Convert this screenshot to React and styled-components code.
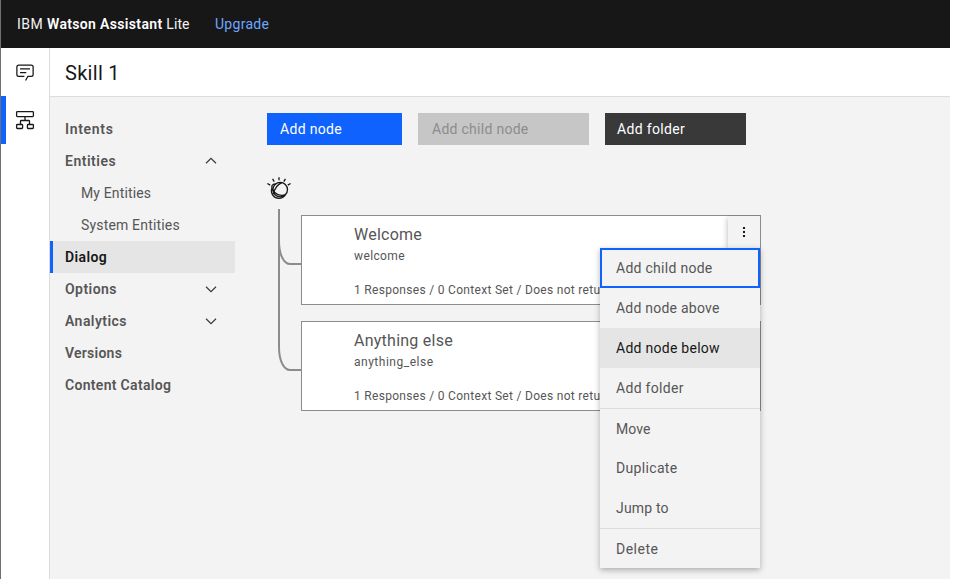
import React from 'react';
import styled, { createGlobalStyle } from 'styled-components';

const GlobalStyle = createGlobalStyle`
  * { box-sizing: border-box; }
  body { margin: 0; background: #fff; overflow: hidden; font-family: Roboto, "Liberation Sans", sans-serif; font-size: 14px; color: #565656; }
  svg { display: block; }
`;

const Frame = styled.div`
  width: 950px;
  height: 579px;
  border-left: 1px solid #6f6f6f;
  background: #f3f3f3;
  display: flex;
  flex-direction: column;
  overflow: hidden;
`;

const Text = styled.span`
  letter-spacing: ${(p) => p.$ls ?? 0.3}px;
  white-space: pre;
`;

const Header = styled.header`
  height: 48px;
  flex: none;
  background: #171717;
  color: #f3f3f3;
  display: flex;
  align-items: center;
  padding-left: 16px;
`;

const Brand = styled.div`
  display: flex;
  width: 198px;
  b { font-weight: 600; color: #fff; }
`;

const Upgrade = styled.a`
  color: #6ea6ff;
`;

const Body = styled.div`
  flex: 1;
  display: flex;
  min-height: 0;
`;

const Rail = styled.nav`
  width: 49px;
  flex: none;
  background: #fff;
  border-right: 1px solid #dcdcdc;
`;

const RailItem = styled.div`
  height: 48px;
  display: flex;
  align-items: center;
  border-left: 5px solid ${(p) => (p.$active ? '#0f62fe' : 'transparent')};
  padding-left: 9px;
  color: #171717;
`;

const Page = styled.div`
  flex: 1;
  display: flex;
  flex-direction: column;
`;

const TitleBar = styled.div`
  height: 49px;
  background: #fff;
  border-bottom: 1px solid #dcdcdc;
  padding: 1px 0 0 15px;
  display: flex;
  align-items: center;
  font-size: 20px;
  color: #171717;
`;

const Content = styled.div`
  flex: 1;
  display: flex;
  gap: 32px;
  padding-top: 16px;
`;

const SideNav = styled.nav`
  width: 185px;
  flex: none;
`;

const NavItem = styled.div`
  height: 32px;
  display: flex;
  align-items: center;
  justify-content: space-between;
  padding: 0 16px 0 ${(p) => (p.$sub ? 28 : 12)}px;
  border-left: 3px solid ${(p) => (p.$active ? '#0f62fe' : 'transparent')};
  background: ${(p) => (p.$active ? '#e5e5e5' : 'transparent')};
  color: ${(p) => (p.$active ? '#171717' : '#565656')};
  font-weight: ${(p) => (p.$sub ? 400 : 600)};
`;

const Toolbar = styled.div`
  display: flex;
  gap: 16px;
`;

const tones = {
  primary: ['#0f62fe', '#fff'],
  disabled: ['#c6c6c6', '#8c8c8c'],
  secondary: ['#393939', '#fff'],
};

const Button = styled.button`
  width: ${(p) => p.$width}px;
  height: 32px;
  border: 0;
  padding: 0 0 0 ${(p) => p.$inset}px;
  text-align: left;
  font: inherit;
  background: ${(p) => tones[p.$tone][0]};
  color: ${(p) => tones[p.$tone][1]};
`;

const Tree = styled.div`
  display: grid;
  grid-template-columns: 34px 460px;
  margin-top: 31px;
`;

const Nodes = styled.div`
  display: flex;
  flex-direction: column;
  gap: 16px;
  padding-top: 39px;
`;

const Node = styled.article`
  position: relative;
  height: 90px;
  background: #fff;
  border: 1px solid #8c8c8c;
  padding: 8px 0 0 52px;
  display: flex;
  flex-direction: column;
`;

const NodeName = styled.div`
  flex: none;
  font-size: 16px;
  line-height: 22px;
`;

const NodeLine = styled.div`
  flex: none;
  font-size: 12px;
  line-height: 20px;
  & + & { margin-top: 14px; }
`;

const Overflow = styled.div`
  position: absolute;
  top: 0;
  right: 0;
  width: 32px;
  height: 32px;
  background: #f3f3f3;
  box-shadow: 0 2px 6px rgba(0, 0, 0, 0.3);
  clip-path: inset(-1px 0 0 -6px);
  display: flex;
  align-items: center;
  justify-content: center;
`;

const Menu = styled.div`
  position: absolute;
  z-index: 2;
  top: 32px;
  right: 0;
  width: 160px;
  background: #f3f3f3;
  box-shadow: 0 2px 6px rgba(0, 0, 0, 0.3);
`;

const MenuItem = styled.div`
  height: 40px;
  display: flex;
  align-items: center;
  padding-left: 16px;
  color: ${(p) => (p.$hover ? '#171717' : '#565656')};
  background: ${(p) => (p.$hover ? '#e5e5e5' : 'transparent')};
  box-shadow: ${(p) => (p.$focus ? 'inset 0 0 0 2px #0f62fe' : p.$divided ? 'inset 0 1px #dcdcdc' : 'none')};
  padding-top: ${(p) => (p.$divided ? 2 : 0)}px;
`;

const ChatIcon = () => (
  <svg width="20" height="20" viewBox="0 0 32 32" fill="currentColor">
    <path d="M17.74 30 16 29l4-7h6a2 2 0 0 0 2-2V8a2 2 0 0 0-2-2H6a2 2 0 0 0-2 2v12a2 2 0 0 0 2 2h9v2H6a4 4 0 0 1-4-4V8a4 4 0 0 1 4-4h20a4 4 0 0 1 4 4v12a4 4 0 0 1-4 4h-4.84Z" />
    <path d="M8 10h16v2H8zM8 16h10v2H8z" />
  </svg>
);

const FlowIcon = () => (
  <svg width="20" height="20" viewBox="0 0 20 20" fill="none" stroke="currentColor" strokeWidth="1.3">
    <rect x="1.6" y="1.6" width="16.8" height="5" rx="0.8" />
    <rect x="1.6" y="14.5" width="6" height="4" rx="0.8" />
    <rect x="12.4" y="14.5" width="6" height="4" rx="0.8" />
    <path d="M10 6.6v3.9M5.5 14.5v-3.2q0-.8.8-.8h7.4q.8 0 .8.8v3.2" />
  </svg>
);

const Chevron = ({ up }) => (
  <svg width="16" height="16" viewBox="0 0 16 16" fill="none" stroke="#393939" strokeWidth="1.2">
    <path d={up ? 'M3 10.3 8 5.4l5 4.9' : 'M3 5.7l5 4.9 5-4.9'} />
  </svg>
);

const DotsIcon = () => (
  <svg width="2" height="10" fill="#171717">
    <path d="M0 0h2v2H0zM0 4h2v2H0zM0 8h2v2H0z" />
  </svg>
);

const TreeLines = () => (
  <svg width="34" height="236" fill="none" stroke="#8c8c8c" strokeWidth="2">
    <g stroke="#171717" strokeWidth="1.3">
      <path d="M12 1.2v3M5.6 2.9l1.6 2.7M18.4 2.9l-1.6 2.7M.4 7.5l2.8 1.6M23.6 7.5l-2.8 1.6" />
      <circle cx="13.2" cy="13.6" r="7.3" />
      <path d="M14.9 6.6C10.9 8.2 7.4 13 6.2 18.4" />
      <path d="M8.8 8C4.8 7.9 4 10.4 5.4 13.4C7.6 17.6 12.4 20.5 18.1 19" />
      <path d="M4.7 12.5C3.4 17.6 6.8 22.3 12 22.3C14.6 22.3 16.8 21.1 18.1 19.2" />
    </g>
    <path d="M12 33v138c0 14 5 23 11 23h11" />
    <path d="M12 65c0 14 5 23 11 23h11" />
  </svg>
);

const navItems = [
  { label: 'Intents', ls: 0.67 },
  { label: 'Entities', ls: 0.5, chevron: 'up' },
  { label: 'My Entities', ls: 0.14, sub: true },
  { label: 'System Entities', ls: 0.17, sub: true },
  { label: 'Dialog', ls: 0.37, active: true },
  { label: 'Options', ls: 0.46, chevron: 'down' },
  { label: 'Analytics', ls: 0.45, chevron: 'down' },
  { label: 'Versions', ls: 0.25 },
  { label: 'Content Catalog', ls: 0.31 },
];

const menuItems = [
  { label: 'Add child node', ls: 0.28, focus: true },
  { label: 'Add node above', ls: 0.23 },
  { label: 'Add node below', ls: 0.27, hover: true },
  { label: 'Add folder', ls: 0.3 },
  { label: 'Move', ls: 0.1, divided: true },
  { label: 'Duplicate', ls: 0.33 },
  { label: 'Jump to', ls: 0.17 },
  { label: 'Delete', ls: 0.5, divided: true },
];

const summary = '1 Responses / 0 Context Set / Does not return';

const NodeCard = ({ name, condition, ls, children }) => (
  <Node>
    <NodeName><Text $ls={0.25}>{name}</Text></NodeName>
    <NodeLine><Text $ls={ls}>{condition}</Text></NodeLine>
    <NodeLine><Text $ls={0.3}>{summary}</Text></NodeLine>
    {children}
  </Node>
);

export default function App() {
  return (
    <>
      <GlobalStyle />
      <Frame>
        <Header>
          <Brand>
            <Text $ls={0.44}>IBM </Text>
            <Text as="b" $ls={0.34}>Watson Assistant </Text>
            <Text $ls={0.1}>Lite</Text>
          </Brand>
          <Upgrade><Text $ls={0.28}>Upgrade</Text></Upgrade>
        </Header>
        <Body>
          <Rail>
            <RailItem><ChatIcon /></RailItem>
            <RailItem $active><FlowIcon /></RailItem>
          </Rail>
          <Page>
            <TitleBar><Text $ls={0.3}>Skill 1</Text></TitleBar>
            <Content>
              <SideNav>
                {navItems.map((n) => (
                  <NavItem key={n.label} $sub={n.sub} $active={n.active}>
                    <Text $ls={n.ls}>{n.label}</Text>
                    {n.chevron && <Chevron up={n.chevron === 'up'} />}
                  </NavItem>
                ))}
              </SideNav>
              <main>
                <Toolbar>
                  <Button $tone="primary" $width={135} $inset={13}><Text $ls={0.32}>Add node</Text></Button>
                  <Button $tone="disabled" $width={171} $inset={14}><Text $ls={0.28}>Add child node</Text></Button>
                  <Button $tone="secondary" $width={141} $inset={12}><Text $ls={0.33}>Add folder</Text></Button>
                </Toolbar>
                <Tree>
                  <TreeLines />
                  <Nodes>
                    <NodeCard name="Welcome" condition="welcome" ls={0.38}>
                      <Overflow><DotsIcon /></Overflow>
                      <Menu>
                        {menuItems.map((m) => (
                          <MenuItem key={m.label} $focus={m.focus} $hover={m.hover} $divided={m.divided}>
                            <Text $ls={m.ls}>{m.label}</Text>
                          </MenuItem>
                        ))}
                      </Menu>
                    </NodeCard>
                    <NodeCard name="Anything else" condition="anything_else" ls={0.51} />
                  </Nodes>
                </Tree>
              </main>
            </Content>
          </Page>
        </Body>
      </Frame>
    </>
  );
}
